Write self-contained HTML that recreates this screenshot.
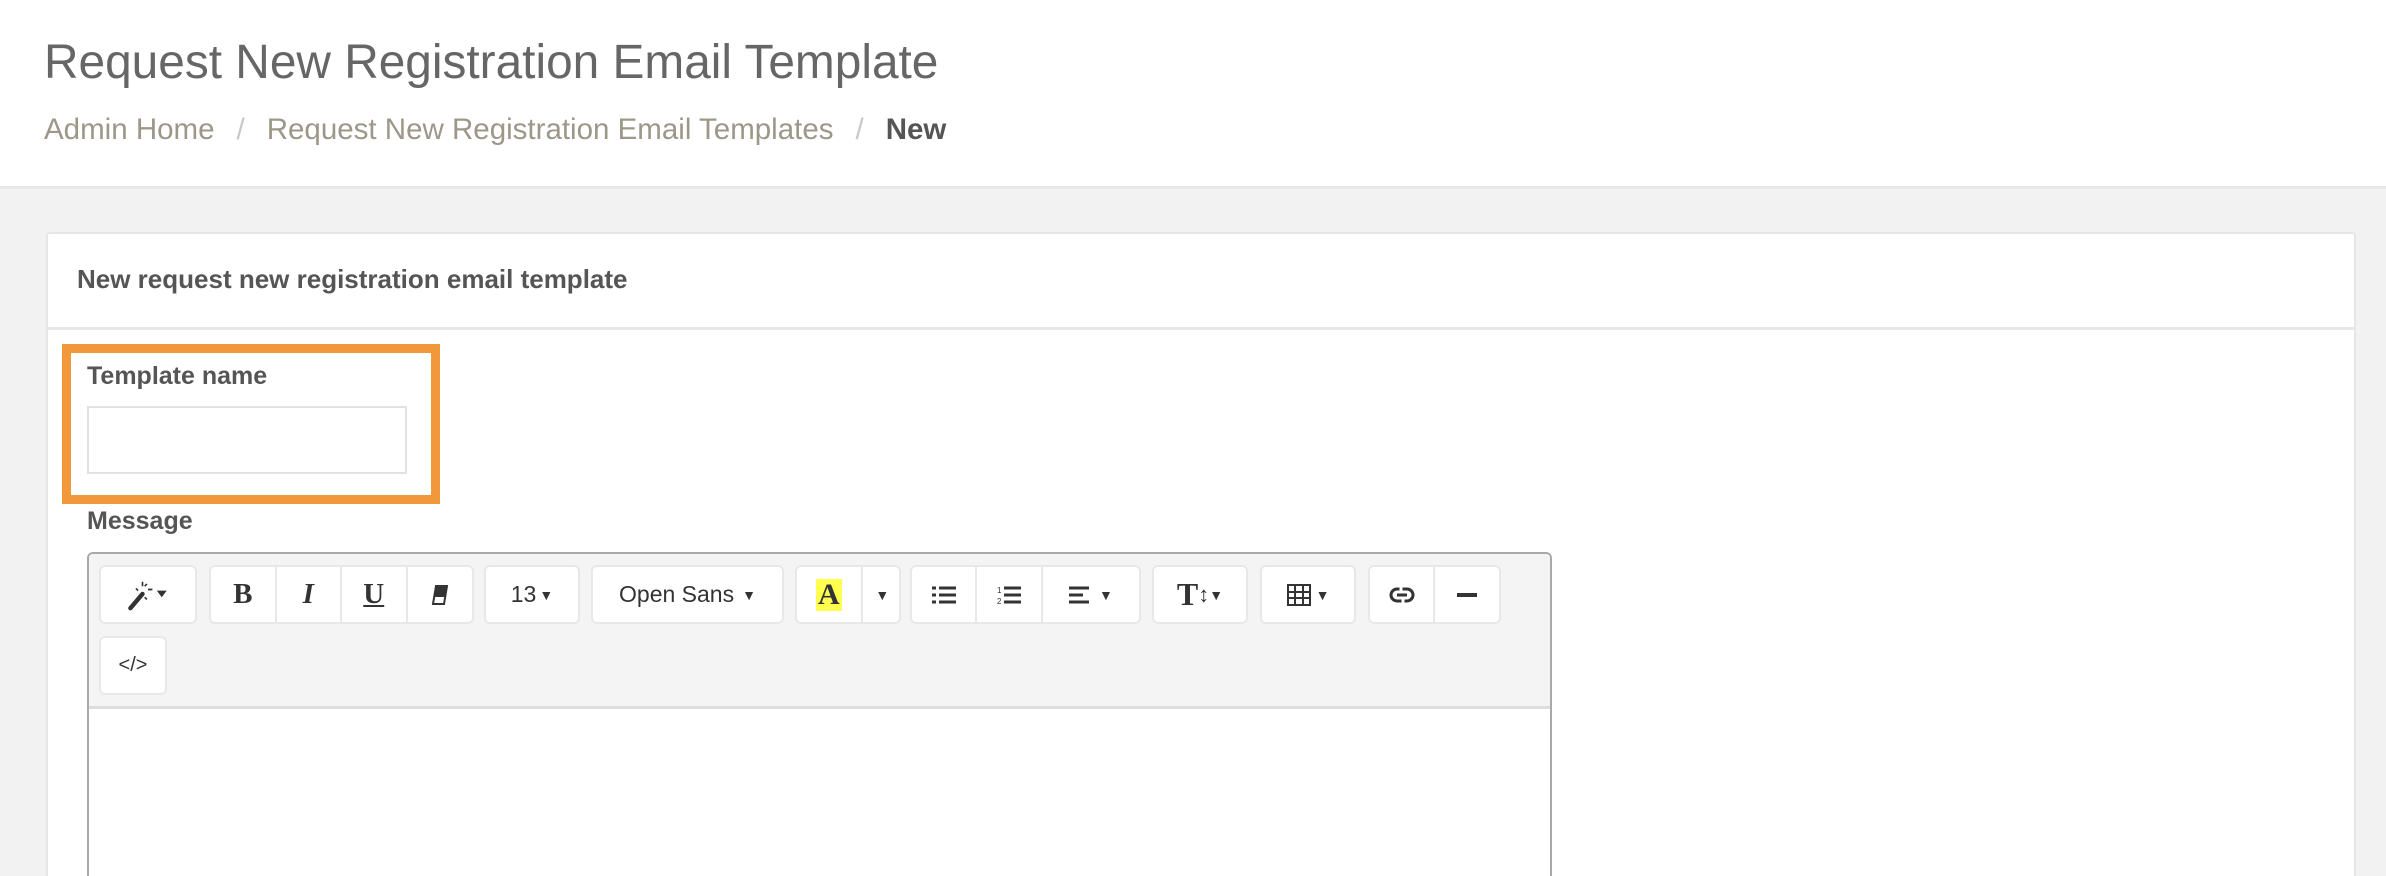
<!DOCTYPE html>
<html style="height:876px;overflow:hidden"><head><meta charset="utf-8"><style>
*{box-sizing:border-box;margin:0;padding:0}
body{width:2386px;height:876px;overflow:hidden;background:#f2f2f2;font-family:"Liberation Sans",sans-serif}
.wrap{position:relative;width:2386px;height:876px;overflow:hidden}
.hdr{position:absolute;left:0;top:0;width:2386px;height:189px;background:#fff;border-bottom:3px solid #e8e8e8}
.title{position:absolute;left:44px;top:35px;font-size:47.8px;color:#666;white-space:nowrap}
.bc{position:absolute;left:44px;top:113px;font-size:29.5px;color:#9d978a;white-space:nowrap}
.bc .s{color:#c8c8c8;margin:0 22px}
.bc b{color:#555}
.panel{position:absolute;left:46px;top:232px;width:2310px;height:700px;background:#fff;border:2px solid #e6e6e6;border-radius:4px}
.ph{position:absolute;left:0;top:0;width:100%;height:96px;border-bottom:3px solid #e8e8e8}
.ph span{position:absolute;left:29px;top:30px;font-size:26px;font-weight:bold;color:#555;white-space:nowrap}
.lbl{position:absolute;font-size:25px;font-weight:bold;color:#555}
.orange{position:absolute;left:62px;top:344px;width:378px;height:160px;border:9px solid #f0983a}
.inp{position:absolute;left:87px;top:406px;width:320px;height:68px;border:2px solid #e2e2e2}
.ed{position:absolute;left:87px;top:552px;width:1465px;height:400px;border:2px solid #a9a9a9;border-radius:6px;background:#fff;overflow:hidden}
.tb{position:absolute;left:0;top:0;width:100%;height:155px;background:#f4f4f4;border-bottom:3px solid #ddd}
.g{position:absolute;height:59px;background:#fff;border:2px solid #e8e8e8;border-radius:6px;display:flex}
.b{height:100%;display:flex;align-items:center;justify-content:center;border-right:2px solid #e8e8e8;font-size:23px;color:#333}
.b:last-child{border-right:none}
.car{font-size:14px;margin-left:3px}
</style></head><body><div class="wrap">
<div class="hdr">
<div class="title">Request New Registration Email Template</div>
<div class="bc">Admin Home<span class="s">/</span>Request New Registration Email Templates<span class="s">/</span><b>New</b></div>
</div>
<div class="panel"><div class="ph"><span>New request new registration email template</span></div></div>
<div class="orange"></div>
<div class="lbl" style="left:87px;top:362px">Template name</div>
<div class="inp"></div>
<div class="lbl" style="left:87px;top:507px">Message</div>
<div class="ed"><div class="tb">
<div class="g" style="left:10px;top:11px;width:98px"><div class="b" style="width:100%">
<svg width="44" height="34" viewBox="0 0 40 30"><path d="M4 27 L15 14" stroke="#333" stroke-width="4" stroke-linecap="round"/><path d="M15 3v4M20 10h4M9 9l2 2M19 5l-2 2M19 19l-2-2" stroke="#333" stroke-width="1.5"/><path d="M28 11h9l-4.5 6z" fill="#333"/></svg></div></div>
<div class="g" style="left:120px;top:11px;width:265px">
<div class="b" style="width:66px;font-family:'Liberation Serif',serif;font-weight:bold;font-size:29px">B</div>
<div class="b" style="width:66px;font-family:'Liberation Serif',serif;font-style:italic;font-weight:bold;font-size:29px">I</div>
<div class="b" style="width:66px;font-family:'Liberation Serif',serif;font-weight:bold;text-decoration:underline;font-size:29px">U</div>
<div class="b" style="width:65px"><svg width="18" height="20" viewBox="0 0 18 20"><path d="M5 1h11l-3 18H2z" fill="#fff" stroke="#333" stroke-width="2"/><path d="M5 1h11l-2 11H3z" fill="#333"/></svg></div>
</div>
<div class="g" style="left:395px;top:11px;width:96px"><div class="b" style="width:100%">13<span class="car">▼</span></div></div>
<div class="g" style="left:502px;top:11px;width:193px"><div class="b" style="width:100%">Open Sans<span class="car" style="margin-left:8px">▼</span></div></div>
<div class="g" style="left:706px;top:11px;width:106px">
<div class="b" style="width:67px"><span style="background:#ffff50;font-family:'Liberation Serif',serif;font-weight:bold;font-size:30px;line-height:32px;padding:0 2px">A</span></div>
<div class="b" style="width:37px"><span class="car">▼</span></div></div>
<div class="g" style="left:821px;top:11px;width:231px">
<div class="b" style="width:66px"><svg width="24" height="18"><path d="M0 2h4M7 2h17M0 9h4M7 9h17M0 16h4M7 16h17" stroke="#333" stroke-width="3"/></svg></div>
<div class="b" style="width:66px"><svg width="24" height="20"><text x="0" y="8" font-size="8" font-family="Liberation Sans" fill="#333">1</text><text x="0" y="19" font-size="8" font-family="Liberation Sans" fill="#333">2</text><path d="M7 3h17M7 10h17M7 17h17" stroke="#333" stroke-width="3"/></svg></div>
<div class="b" style="width:97px"><svg width="24" height="18"><path d="M0 2h20M0 9h14M0 16h20" stroke="#333" stroke-width="3"/></svg><span class="car" style="margin-left:6px">▼</span></div></div>
<div class="g" style="left:1063px;top:11px;width:96px"><div class="b" style="width:100%"><span style="font-family:'Liberation Serif',serif;font-weight:bold;font-size:32px">T</span><span style="font-size:22px">↕</span><span class="car" style="margin-left:0">▼</span></div></div>
<div class="g" style="left:1171px;top:11px;width:96px"><div class="b" style="width:100%"><svg width="24" height="22"><path d="M1 1h22v20H1zM1 8h22M1 14h22M8 1v20M16 1v20" stroke="#333" stroke-width="2" fill="none"/></svg><span class="car" style="margin-left:5px">▼</span></div></div>
<div class="g" style="left:1279px;top:11px;width:133px">
<div class="b" style="width:66px"><svg width="26" height="16"><rect x="2" y="2" width="22" height="12" rx="6" fill="none" stroke="#333" stroke-width="3"/><path d="M8 8h10" stroke="#333" stroke-width="3"/><path d="M12 0v4M14 12v4" stroke="#fff" stroke-width="3"/></svg></div>
<div class="b" style="width:65px"><svg width="20" height="6"><path d="M0 3h20" stroke="#333" stroke-width="4"/></svg></div></div>
<div class="g" style="left:10px;top:82px;width:68px"><div class="b" style="width:100%;font-size:20px">&lt;/&gt;</div></div>
</div></div>
</div></body></html>
